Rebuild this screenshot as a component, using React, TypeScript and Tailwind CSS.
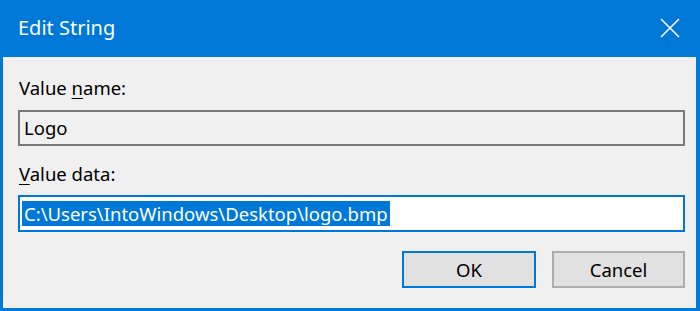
const FONT = { fontFamily: '"Noto Sans", "Open Sans", sans-serif' };

function CloseIcon() {
  return (
    <svg width="20" height="20" viewBox="0 0 20 20" fill="none" stroke="white" strokeWidth="1.6">
      <path d="M1 1L19 19M19 1L1 19" />
    </svg>
  );
}

export default function App() {
  return (
    <div className="flex h-[311px] w-[700px] flex-col bg-[#0078d7] pb-[3px] pl-[3px] pr-[4px]" style={FONT}>
      <div className="flex h-[57px] shrink-0 items-center justify-between pl-[15px] pr-[16px] pb-[2px] text-white">
        <span className="text-[20px] leading-none">Edit String</span>
        <CloseIcon />
      </div>
      <div className="flex flex-1 flex-col bg-[#f0f0f0] pl-[15px] pr-[11px] text-[18.5px] leading-[24px] text-black">
        <div className="mt-[19px] pl-px">
          Value <span className="underline decoration-1 underline-offset-[3px]">n</span>ame:
        </div>
        <div className="mt-[10px] flex h-[36px] items-center border-2 border-[#7a7a7a] bg-[#f0f0f0] px-[4px]">
          Logo
        </div>
        <div className="mt-[16px] pl-px">
          <span className="underline decoration-1 underline-offset-[3px]">V</span>alue data:
        </div>
        <div className="mt-[9px] flex h-[37px] items-center border-2 border-[#0078d7] bg-white px-[2px]">
          <span className="bg-[#0078d7] px-[2px] text-white leading-[25px]">
            C:\Users\IntoWindows\Desktop\logo.bmp
          </span>
        </div>
        <div className="mt-[19px] flex justify-end gap-[16px]">
          <button className="h-[37px] w-[134px] border-2 border-[#0078d7] bg-[#e1e1e1] text-[18.5px]">OK</button>
          <button className="h-[37px] w-[133px] border-2 border-[#adadad] bg-[#e1e1e1] text-[18.5px]">Cancel</button>
        </div>
      </div>
    </div>
  );
}
